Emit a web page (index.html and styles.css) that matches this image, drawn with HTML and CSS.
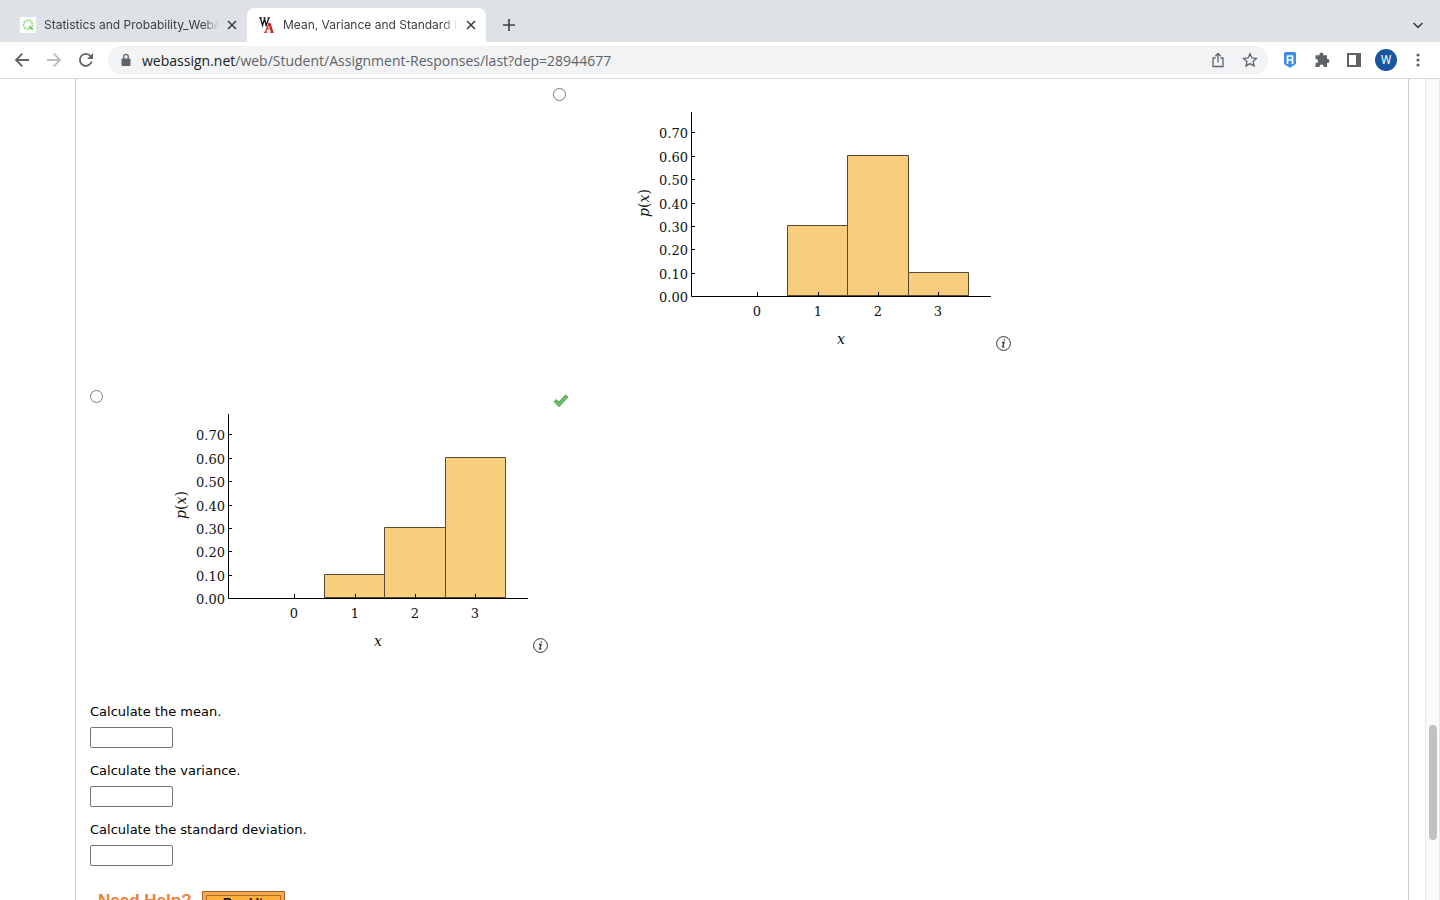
FILE: index.html
```html
<!DOCTYPE html>
<html lang="en">
<head>
  <meta charset="UTF-8">
  <title>Mean, Variance and Standard Deviation</title>
  <meta name="viewport" content="width=device-width, initial-scale=1">
  <link rel="stylesheet" href="styles.css">
</head>
<body>
  <header>
    <div class="tabs">
      <div class="tab">
        <svg class="favicon" viewBox="0 0 16 16"><path fill="#fff" stroke="none" d="M0 0h16v16H0z"/><circle cx="8" cy="7.800" r="4.400" fill="none" stroke="#8fe07c" stroke-width="1.800" stroke-dasharray="2.200 .8"/><path d="M9 9.500l4 3" stroke="#62cf5c" stroke-width="2"/></svg>
        <span class="tab-title">Statistics and Probability_WebAssign</span>
        <button class="close" aria-label="Close tab"><svg viewBox="0 0 10 10"><path d="M1 1l8 8M9 1L1 9"/></svg></button>
      </div>
      <div class="tab active">
        <svg class="favicon" viewBox="0 0 16 16"><path d="M1.500 1l2 7.500L5.500 2l1.700 6.500L9.800 1" fill="none" stroke="#111" stroke-width="1.300"/><path d="M0 .8h3M4.300 .8h2.400M8.500 .8h2.500" stroke="#111"/><path d="M6.500 15l3.800-9" fill="none" stroke="#c5281c" stroke-width="1.200"/><path d="M10.300 6l2.900 9" stroke="#c5281c" stroke-width="2.400"/><path d="M8 11.800h4M5 15.300h3.500M11 15.300h4" stroke="#c5281c"/></svg>
        <span class="tab-title">Mean, Variance and Standard Deviation</span>
        <button class="close" aria-label="Close tab"><svg viewBox="0 0 10 10"><path d="M1 1l8 8M9 1L1 9"/></svg></button>
      </div>
      <button class="new-tab" aria-label="New tab"><svg viewBox="0 0 12 12"><path d="M6 0v12M0 6h12"/></svg></button>
      <button class="tab-search" aria-label="Search tabs"><svg viewBox="0 0 12 12"><path d="M1.500 4L6 8.300 10.500 4"/></svg></button>
    </div>
    <div class="toolbar">
      <button class="tool" aria-label="Back"><svg viewBox="0 0 16 16"><path d="M15 8H2.500M8.300 1.700L2 8l6.300 6.300"/></svg></button>
      <button class="tool off" aria-label="Forward"><svg viewBox="0 0 16 16"><path d="M1 8h12.500M7.700 1.700L14 8l-6.300 6.300"/></svg></button>
      <button class="tool" aria-label="Reload"><svg viewBox="0 0 16 16"><path d="M13.600 9.500A6 6 0 1 1 12.500 4"/><path class="fill" d="M15 1v6H9z"/></svg></button>
      <div class="omnibox">
        <svg class="lock" viewBox="0 0 16 16"><path class="fill" d="M4.500 6.500h7a1 1 0 0 1 1 1V13a1 1 0 0 1-1 1h-7a1 1 0 0 1-1-1V7.500a1 1 0 0 1 1-1z"/><path d="M5.800 7V4.500a2.200 2.200 0 0 1 4.400 0V7" stroke-width="1.300"/></svg>
        <label for="url">webassign.net</label>
        <input id="url" type="text" value="/web/Student/Assignment-Responses/last?dep=28944677">
        <button class="tool thin" aria-label="Share"><svg viewBox="0 0 16 16"><path d="M5.500 6H3v8.500h10V6h-2.500M8 10.500V2M5.300 4.300L8 1.500l2.700 2.800"/></svg></button>
        <button class="tool thin" aria-label="Bookmark"><svg viewBox="0 0 16 16"><path d="M8 1.800l1.900 4.100 4.500.5-3.300 3 .9 4.500L8 11.600l-4 2.300.9-4.500-3.300-3 4.500-.5z"/></svg></button>
      </div>
      <button class="tool" aria-label="Honey"><svg viewBox="0 0 16 16"><path fill="#3b8eea" stroke="none" d="M3.500 0h9A1.500 1.500 0 0 1 14 1.500V11c0 2-4 3-6 5-2-2-6-3-6-5V1.500A1.500 1.500 0 0 1 3.500 0z"/><path d="M5.500 12V3.500M10.500 12V3.500M5.500 4h5M5.500 8h5" stroke="#fff" stroke-width="1.700"/></svg></button>
      <button class="tool" aria-label="Extensions"><svg viewBox="0 0 16 16"><path class="fill" d="M2 3.200h3.500a2 2 0 1 1 3.800 0h3.700V7a2 2 0 1 1 0 3.900V15H9.500a2 2 0 1 0-3.800 0H1.500v-4a2 2 0 1 0 0-3.800V3.700z"/></svg></button>
      <button class="tool" aria-label="Side panel"><svg viewBox="0 0 16 16"><path class="fill" fill-rule="evenodd" d="M1 1h14v14H1zM3 3v10h7V3z"/></svg></button>
      <button class="tool" aria-label="Profile"><span class="avatar">W</span></button>
      <button class="tool" aria-label="Menu"><svg viewBox="0 0 16 16"><g class="fill"><circle cx="8" cy="3" r="1.600"/><circle cx="8" cy="8" r="1.600"/><circle cx="8" cy="13" r="1.600"/></g></svg></button>
    </div>
  </header>

  <div class="viewport">
    <main>
      <div class="choices">
        <div class="choice second">
          <input type="radio" name="histogram" aria-label="Histogram with bars 0.30, 0.60, 0.10">
          <figure>
            <svg class="chart" viewBox="0 0 356 247">
              <g class="bars">
                <path d="M151.500 121.500h60v70h-60z"/>
                <path d="M211.500 51.500h61v140h-61z"/>
                <path d="M272.500 168.500h60v23h-60z"/>
              </g>
              <path class="axis" d="M55.500 8v184.500H355M55 28.500h4M55 52.500h4M55 75.500h4M55 99.500h4M55 122.500h4M55 145.500h4M55 169.500h4M121.500 193v-5M182.500 193v-5M242.500 193v-5M302.500 193v-5"/>
              <g class="y-labels">
                <text x="52" y="34">0.70</text>
                <text x="52" y="58">0.60</text>
                <text x="52" y="81">0.50</text>
                <text x="52" y="105">0.40</text>
                <text x="52" y="128">0.30</text>
                <text x="52" y="151">0.20</text>
                <text x="52" y="175">0.10</text>
                <text x="52" y="198">0.00</text>
              </g>
              <g class="x-labels">
                <text x="121" y="212">0</text>
                <text x="182" y="212">1</text>
                <text x="242" y="212">2</text>
                <text x="302" y="212">3</text>
                <text class="name" x="205" y="240"><tspan>x</tspan></text>
                <text class="name" transform="translate(13 99) rotate(-90)"><tspan>p</tspan>(<tspan>x</tspan>)</text>
              </g>
            </svg>
            <button class="info" aria-label="Graph description"><svg viewBox="0 0 15 15"><circle cx="7.500" cy="7.500" r="6.900"/><path d="M6 6.500h2l-1.300 4.300h1.700" stroke-width="1.300"/><circle class="fill" cx="8.300" cy="4" r=".8"/></svg></button>
          </figure>
        </div>
        <div class="choice">
          <input type="radio" name="histogram" aria-label="Histogram with bars 0.10, 0.30, 0.60">
          <figure>
            <svg class="chart" viewBox="0 0 356 247">
              <g class="bars">
                <path d="M151.500 168.500h60v23h-60z"/>
                <path d="M211.500 121.500h61v70h-61z"/>
                <path d="M272.500 51.500h60v140h-60z"/>
              </g>
              <path class="axis" d="M55.500 8v184.500H355M55 28.500h4M55 52.500h4M55 75.500h4M55 99.500h4M55 122.500h4M55 145.500h4M55 169.500h4M121.500 193v-5M182.500 193v-5M242.500 193v-5M302.500 193v-5"/>
              <g class="y-labels">
                <text x="52" y="34">0.70</text>
                <text x="52" y="58">0.60</text>
                <text x="52" y="81">0.50</text>
                <text x="52" y="105">0.40</text>
                <text x="52" y="128">0.30</text>
                <text x="52" y="151">0.20</text>
                <text x="52" y="175">0.10</text>
                <text x="52" y="198">0.00</text>
              </g>
              <g class="x-labels">
                <text x="121" y="212">0</text>
                <text x="182" y="212">1</text>
                <text x="242" y="212">2</text>
                <text x="302" y="212">3</text>
                <text class="name" x="205" y="240"><tspan>x</tspan></text>
                <text class="name" transform="translate(13 99) rotate(-90)"><tspan>p</tspan>(<tspan>x</tspan>)</text>
              </g>
            </svg>
            <button class="info" aria-label="Graph description"><svg viewBox="0 0 15 15"><circle cx="7.500" cy="7.500" r="6.900"/><path d="M6 6.500h2l-1.300 4.300h1.700" stroke-width="1.300"/><circle class="fill" cx="8.300" cy="4" r=".8"/></svg></button>
          </figure>
        </div>
        <div class="mark">
          <svg viewBox="0 0 16 14"><path d="M1 7.500l2.500-2L6 8l6.500-7L15 3 6 12.800z" fill="#6cc065" stroke="#3d8c3d" stroke-width=".8"/></svg>
        </div>
      </div>

      <div class="question">
        <label for="mean">Calculate the mean.</label>
        <input id="mean" type="text">
      </div>
      <div class="question">
        <label for="variance">Calculate the variance.</label>
        <input id="variance" type="text">
      </div>
      <div class="question">
        <label for="deviation">Calculate the standard deviation.</label>
        <input id="deviation" type="text">
      </div>

      <div class="help">
        <strong>Need Help?</strong>
        <button>Read It</button>
      </div>
    </main>
    <div class="scrollbar"><div class="thumb"></div></div>
  </div>
</body>
</html>
```
FILE: styles.css
```css
* { box-sizing: border-box; }
body {
  margin: 0;
  height: 100vh;
  display: flex;
  flex-direction: column;
  overflow: hidden;
  background: #fff;
  color: #000;
  font-family: "DejaVu Sans", Verdana, sans-serif;
  font-size: 13px;
}
button {
  border: none;
  background: none;
  padding: 0;
  cursor: pointer;
}
svg {
  display: block;
  fill: none;
  stroke: #5f6368;
}
.fill { fill: #5f6368; stroke: none; }

/* tabs */
header { font-family: Inter, Roboto, Arial, sans-serif; }
.tabs {
  height: 42px;
  padding: 8px 16px 0 8px;
  display: flex;
  background: #dee1e6;
}
.tab {
  width: 239px;
  height: 34px;
  padding: 0 10px 1px 12px;
  display: flex;
  align-items: center;
  gap: 8px;
  color: #3c4043;
  font-size: 12px;
}
.tab.active {
  background: #fff;
  border-radius: 8px 8px 0 0;
}
.favicon { width: 16px; height: 16px; flex: none; }
.tab-title {
  flex: 1;
  overflow: hidden;
  white-space: nowrap;
  mask-image: linear-gradient(to left, transparent, #000 16px);
}
.close, .close svg { width: 10px; height: 10px; }
.tabs button svg { stroke: #3c4043; stroke-width: 1.6; }
.new-tab { padding: 0 17px; }
.new-tab svg, .tab-search svg { width: 12px; height: 12px; }
.tab-search { margin-left: auto; }

/* toolbar */
.toolbar {
  height: 37px;
  padding: 0 6px;
  display: flex;
  align-items: center;
  border-bottom: 1px solid #d9dbde;
}
.tool {
  width: 32px;
  height: 28px;
  flex: none;
  display: flex;
  align-items: center;
  justify-content: center;
}
.tool svg { width: 16px; height: 16px; stroke-width: 1.8; }
.thin svg { stroke-width: 1.3; }
.off svg { stroke: #babcbe; }
.omnibox {
  flex: 1;
  height: 28px;
  margin: 0 6px;
  padding: 0 2px 0 10px;
  display: flex;
  align-items: center;
  border-radius: 14px;
  background: #f1f3f4;
  font: 14px "Open Sans", Arial, sans-serif;
}
.lock { width: 16px; height: 16px; margin-right: 8px; }
.omnibox label { color: #202124; }
.omnibox input {
  flex: 1;
  padding: 0;
  border: none;
  outline: none;
  background: none;
  font: inherit;
  color: #5f6368;
}
.avatar {
  width: 22px;
  height: 22px;
  border-radius: 50%;
  background: #17579f;
  color: #fff;
  font: 12px/22px Roboto, Arial, sans-serif;
}

/* page */
.viewport {
  flex: 1;
  min-height: 0;
  display: flex;
}
main {
  flex: 1;
  margin: 0 16px 0 75px;
  padding: 9px 14px 0;
  border: 1px solid #ccc;
  border-width: 0 1px;
  overflow: hidden;
}
.choices {
  display: grid;
  grid-template-columns: 463px 463px;
  grid-auto-rows: 302px;
  margin-bottom: 12px;
}
.second { grid-column: 2; }
.choice input {
  display: block;
  width: 13px;
  height: 13px;
  margin: 0 0 3px;
}
figure {
  margin: 0 0 0 83px;
  display: flex;
  align-items: flex-end;
  gap: 4px;
}
.chart { width: 356px; height: 247px; }
.bars { fill: #f8ce7d; stroke: #544a35; }
.axis { stroke: #000; }
.chart text {
  font: 13px "DejaVu Serif", serif;
  fill: #111;
  stroke: none;
}
.y-labels { text-anchor: end; }
.x-labels { text-anchor: middle; }
.chart .name { font-size: 14px; }
.name tspan { font-style: italic; }
.info, .info svg { width: 15px; height: 15px; }
.info svg { stroke: #333; }
.info .fill { fill: #333; }
.mark { padding-top: 4px; }
.mark svg { width: 16px; height: 14px; }

.question { margin-bottom: 15px; }
.question label {
  display: block;
  line-height: 16px;
  margin-bottom: 7px;
}
.question input {
  display: block;
  width: 83px;
  height: 21px;
  border: 1px solid #767676;
  border-radius: 2px;
}
.help {
  display: flex;
  gap: 10px;
  margin-top: 25px;
  padding-left: 8px;
}
.help strong {
  font: bold 17px/20px "Liberation Sans", Arial, sans-serif;
  color: #e9813b;
}
.help button {
  width: 83px;
  height: 24px;
  border: 1px solid #a8642a;
  box-shadow: inset 0 0 0 3px #f3a94d, inset 0 0 0 4px #b06c22;
  background: #fbb03f;
  font: bold 12px "Liberation Sans", Arial, sans-serif;
}

.scrollbar {
  width: 15px;
  padding: 0 2px 0 3px;
  display: grid;
  grid-template-rows: 646fr 115fr 60fr;
  background: #fafafa;
  border: 1px solid #e8e8e8;
  border-width: 0 1px;
}
.thumb {
  grid-row: 2;
  border-radius: 4px;
  background: #c1c1c1;
}
```
